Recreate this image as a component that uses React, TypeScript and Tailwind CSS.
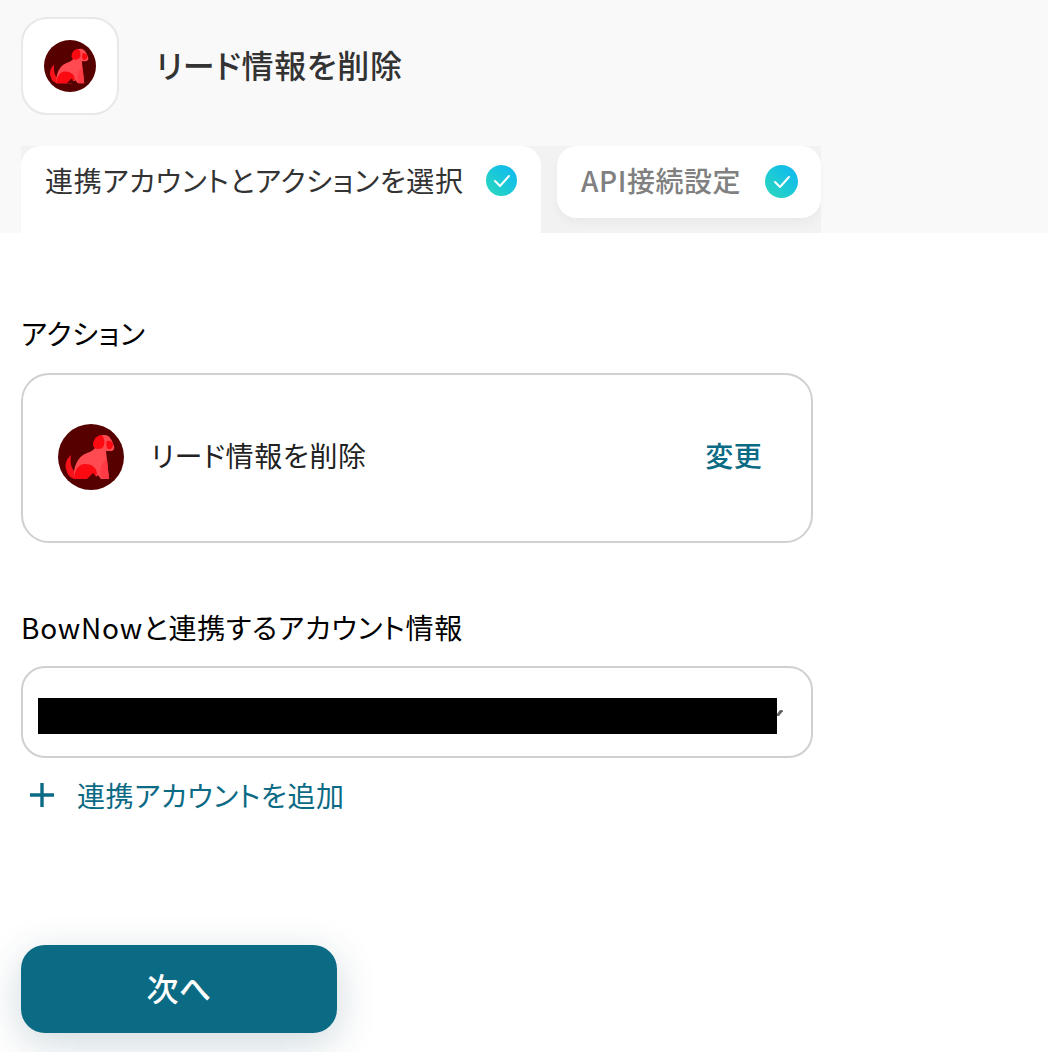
const font = { fontFamily: '"Noto Sans CJK JP", "Noto Sans", sans-serif' };

function DogLogo({ size }: { size: number }) {
  return (
    <svg width={size} height={size} viewBox="0 0 66 66" className="shrink-0">
      <circle cx="33" cy="33" r="33" fill="#560000" />
      <path d="M13 31c-5 4-7 11-4 17 1 4 5 7 9 7l-1-7c-4-4-5-10-4-17z" fill="#f5121a" />
      <path
        d="M16 55c-1-10 2-19 9-24 5-3 9-3 12-7 0-7 3-13 9-13 4 0 6 2 8 6l2 5c1 3-1 5-3 5l-5 0 3 28h-8l-3-4-5 4H16z"
        fill="#ff4a52"
      />
      <path d="M35 21c0-5 3-9 8-10 3 2 4 6 3 10-1 3-3 4-6 4-3 0-5-2-5-4z" fill="#fb0a12" />
      <path d="M49 17c3-1 6 1 6 4s-3 5-5 4c-2-2-2-6-1-8z" fill="#fb0a12" />
      <path d="M16 55c0-8 4-15 11-15 8 0 12 5 12 10l-4 5z" fill="#fb0a12" />
      <path d="M29 55l6-6 5 6z" fill="#560000" />
      <path d="M44 40l-2 8 2 7h7l-2-20z" fill="#ff3a44" />
    </svg>
  );
}

function Check({ size }: { size: number }) {
  return (
    <span
      className="mt-[3px] flex shrink-0 items-center justify-center rounded-full bg-gradient-to-tr from-[#2dd9b8] to-[#12b5f5]"
      style={{ width: size, height: size }}
    >
      <svg width="18" height="14" viewBox="0 0 18 14" fill="none">
        <path d="M2 7l5 5 9-10" stroke="#fff" strokeWidth="2" strokeLinecap="round" strokeLinejoin="round" />
      </svg>
    </span>
  );
}

export default function App() {
  return (
    <div
      className="h-[1052px] w-[1048px] overflow-hidden bg-white tracking-[0.02em] text-[#222] [font-feature-settings:'palt']"
      style={font}
    >
      <header className="h-[233px] bg-[#f9f9f9] pl-[21px] pt-[17px]">
        <div className="flex items-center">
          <div className="flex h-[98px] w-[98px] items-center justify-center rounded-[26px] border-2 border-[#e8e8e8] bg-white">
            <DogLogo size={52} />
          </div>
          <h1 className="ml-[37px] pb-[4px] text-[32px] font-medium leading-none tracking-[0.024em] text-[#333]">
            リード情報を削除
          </h1>
        </div>

        <div className="mt-[31px] flex w-[800px] items-start bg-[#f2f2f2]">
          <div className="flex h-[87px] w-[520px] items-start rounded-t-[20px] bg-white pl-[24px] pt-[16px]">
            <span className="w-[441px] text-[28px] leading-[36px] tracking-[0.025em] text-[#333]">連携アカウントとアクションを選択</span>
            <Check size={31} />
          </div>
          <div className="ml-[16px] flex h-[72px] w-[264px] items-start rounded-[20px] bg-white pl-[24px] pt-[16px] shadow-[0_6px_10px_rgba(0,0,0,0.03)]">
            <span className="w-[184px] text-[28px] font-medium leading-[36px] tracking-[0.02em] text-[#808080]">API接続設定</span>
            <Check size={33} />
          </div>
        </div>
      </header>

      <main className="pl-[21px]">
        <h2 className="mt-[82px] text-[28px] leading-[36px] tracking-[0.022em] text-black">アクション</h2>
        <div className="mt-[22px] flex h-[170px] w-[792px] items-center rounded-[28px] border-2 border-[#d0d0d0] pl-[35px] pr-[49px]">
          <div className="mb-[2px] shrink-0">
            <DogLogo size={66} />
          </div>
          <span className="ml-[27px] pb-[6px] text-[28px] leading-none tracking-[0.023em] text-[#222]">リード情報を削除</span>
          <span className="ml-auto pb-[6px] text-[28px] font-medium leading-none text-[#0b6a84]">変更</span>
        </div>

        <h2 className="mt-[66px] text-[28px] leading-[36px] tracking-[0.028em] text-black">
          BowNowと連携するアカウント情報
        </h2>
        <div className="relative mt-[21px] h-[92px] w-[792px] rounded-[24px] border-2 border-[#d0d0d0]">
          <svg width="6" height="6" viewBox="0 0 6 6" className="absolute left-[754px] top-[42px]">
            <path d="M0 6L5 0" stroke="#666" strokeWidth="3" />
          </svg>
          <div className="absolute left-[15px] top-[30px] h-[36px] w-[739px] bg-black" />
        </div>

        <button className="mt-[19px] flex items-center text-[#0b6a84]">
          <svg width="26" height="26" viewBox="0 0 26 26" className="ml-[8px]">
            <path d="M13 1v24M1 13h24" stroke="#0b6a84" strokeWidth="3.4" />
          </svg>
          <span className="ml-[22px] text-[28px] leading-[36px] tracking-[0.022em]">連携アカウントを追加</span>
        </button>

        <button className="mt-[132px] flex h-[88px] w-[316px] items-center justify-center rounded-[24px] bg-[#0b6a84] pb-[4px] text-[32px] font-medium text-white shadow-[0_10px_40px_rgba(11,60,80,0.2)]">
          次へ
        </button>
      </main>
    </div>
  );
}
